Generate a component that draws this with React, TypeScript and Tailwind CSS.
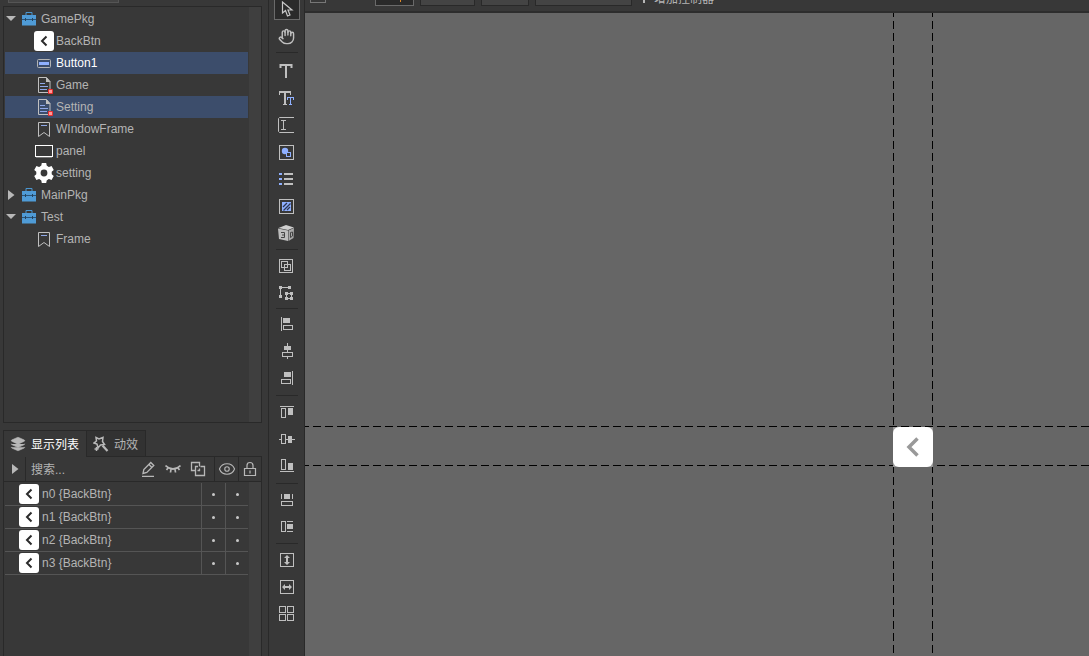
import React from "react";
import { Hand, Layers, Eye } from "lucide-react";

const treeItems = [
  { kind: "package", name: "GamePkg", open: true },
  { kind: "back", name: "BackBtn" },
  { kind: "button", name: "Button1", selected: true, active: true },
  { kind: "document", name: "Game" },
  { kind: "document", name: "Setting", selected: true },
  { kind: "bookmark", name: "WIndowFrame" },
  { kind: "panel", name: "panel" },
  { kind: "gear", name: "setting" },
  { kind: "package", name: "MainPkg", open: false },
  { kind: "package", name: "Test", open: true },
  { kind: "bookmark", name: "Frame" },
];

const displayList = ["n0 {BackBtn}", "n1 {BackBtn}", "n2 {BackBtn}", "n3 {BackBtn}"];

const BackIcon = () => (
  <svg width="20" height="20" viewBox="0 0 20 20" className="block shrink-0">
    <rect width="20" height="20" rx="3" fill="#fff" />
    <path d="M12.5 5.5 8 10l4.5 4.5" fill="none" stroke="#2b2b2b" strokeWidth="2" />
  </svg>
);

const itemIcons: Record<string, React.ReactNode> = {
  back: <BackIcon />,
  button: (
    <svg width="20" height="20" viewBox="0 0 20 20">
      <rect x="3.5" y="6.5" width="13" height="8" rx="1" fill="none" stroke="#b4b4b4" />
      <rect x="5" y="9" width="10" height="3" fill="#8fb0ff" />
    </svg>
  ),
  document: (
    <svg width="20" height="20" viewBox="0 0 20 20">
      <path d="M4.5 2.5h8l3.500 4v11H4.500z" fill="none" stroke="#c0c0c0" />
      <path d="M12 2v5h4.500z" fill="#c0c0c0" />
      <path d="M6 8.500h5M6 11.500h8M6 14.500h7" stroke="#8fa8e8" />
      <rect x="14" y="14" width="5" height="5" rx="1" fill="#f03030" />
      <rect x="15" y="15" width="3" height="3" fill="#ff9a9a" />
    </svg>
  ),
  bookmark: (
    <svg width="20" height="20" viewBox="0 0 20 20">
      <path d="M4.500 3.500h11v14l-5.500-4-5.500 4z" fill="none" stroke="#c0c0c0" />
      <path d="M7 6.500h6" stroke="#8fa8e8" />
    </svg>
  ),
  panel: (
    <svg width="20" height="20" viewBox="0 0 20 20">
      <rect x="1.500" y="4.500" width="17" height="11" fill="none" stroke="#fff" />
      <path d="M2 16.500h16" stroke="#777" />
    </svg>
  ),
  gear: (
    <svg width="20" height="20" viewBox="0 0 20 20" fill="#fff">
      <circle cx="10" cy="10" r="5.600" fill="none" stroke="#fff" strokeWidth="4.400" />
      <path d="M7.800 0h4.400l.8 4H7zM7.800 20h4.400l.8-4H7z" />
      <path d="M7.800 0h4.400l.8 4H7zM7.800 20h4.400l.8-4H7z" transform="rotate(60 10 10)" />
      <path d="M7.800 0h4.400l.8 4H7zM7.800 20h4.400l.8-4H7z" transform="rotate(120 10 10)" />
    </svg>
  ),
};

const PackageIcon = () => (
  <svg width="16" height="16" viewBox="0 0 16 16" className="block shrink-0">
    <path d="M5 4.500V1.500h6v3" fill="none" stroke="#4a97d2" />
    <path d="M1 4h14v4H1zM1 9h14v5.500H1z" fill="#4f9bd6" />
    <path d="M1 8.500h14" stroke="#2b5478" />
    <path d="M4.500 7v3M11.500 7v3" stroke="#24445e" />
  </svg>
);

const Caret = ({ open }: { open?: boolean }) => (
  <svg width="10" height="10" viewBox="0 0 10 10" fill="#b8b8b8" className="shrink-0">
    {open ? <path d="M0 2h10L5 7z" /> : <path d="M2 0v10L8.500 5z" />}
  </svg>
);

const Outline = (props: React.SVGProps<SVGRectElement>) => (
  <rect fill="none" stroke="#bfbfbf" {...props} />
);

const toolGroups = [
  {
    line: "mt-[2px] mb-[5px]",
    tools: [
      {
        label: "Text",
        icon: <path d="M7 7h12M13 6v14M7.500 6v4M18.500 6v4" stroke="#bfbfbf" strokeWidth="2" />,
      },
      {
        label: "Rich text",
        icon: (
          <>
            <path d="M6 7h12M12 6v14" stroke="#bfbfbf" strokeWidth="2" />
            <path d="M6.500 6v4M17.500 6v4M10 19.500h4" stroke="#bfbfbf" />
            <path d="M14 11h8v9h-8z" fill="#383838" />
            <path d="M14 12.500h7M17.500 12v8M14.500 12v3M20.500 12v3M16 19.500h3" stroke="#8fb0ff" />
          </>
        ),
      },
      {
        label: "Input text",
        icon: (
          <path
            d="M21 5.500H6.500L5.500 6.500v13l1 1H21M8 8.500h5M8 17.500h5M10.500 8v10"
            fill="none"
            stroke="#bfbfbf"
          />
        ),
      },
      {
        label: "Graph",
        icon: (
          <>
            <Outline x="6.500" y="6.500" width="14" height="14" />
            <circle cx="12" cy="12" r="3.200" fill="#8fb0ff" />
            <rect x="13.500" y="13.500" width="4" height="4" fill="#383838" stroke="#8fb0ff" />
          </>
        ),
      },
      {
        label: "List",
        icon: (
          <>
            <path d="M6 8h3M6 13h3M6 18h3" stroke="#8fb0ff" strokeWidth="2" />
            <path d="M11 8h9M11 13h9M11 18h9" stroke="#bfbfbf" strokeWidth="2" />
          </>
        ),
      },
      {
        label: "Loader",
        icon: (
          <>
            <Outline x="6.500" y="6.500" width="14" height="14" />
            <rect x="9" y="9" width="9" height="9" fill="#8fb0ff" />
            <path d="M10 14l4-4M10.500 17.500l7-7M14 17l3-3" stroke="#2c3650" strokeWidth="1.300" />
          </>
        ),
      },
      {
        label: "3D loader",
        icon: (
          <>
            <path d="M5.500 8l7.500-3 8 2.500-6 2.500z" fill="#cfcfcf" />
            <path d="M5 8.500l10 2V21l-9-2z" fill="#bdbdbd" />
            <path d="M15.500 10.500L21 8l-.5 10-5 3z" fill="#a8a8a8" />
            <path d="M8 12.500h3.500v5H8M9 15h2.500" fill="none" stroke="#444" />
            <path d="M17.500 12.500v5l2-1.500v-4z" fill="none" stroke="#444" />
          </>
        ),
      },
    ],
  },
  {
    line: "mt-[2px] mb-[3px]",
    tools: [
      {
        label: "Group",
        icon: (
          <>
            <Outline x="6.500" y="6.500" width="13" height="13" />
            <Outline x="8.500" y="8.500" width="6" height="6" />
            <Outline x="11.500" y="11.500" width="6" height="6" />
          </>
        ),
      },
      {
        label: "Ungroup",
        icon: (
          <>
            <path d="M7.500 18V7.500H17" fill="none" stroke="#bfbfbf" />
            <path d="M6 6h3v3H6zM15 6h3v3h-3zM6 15h3v3H6z" fill="#bfbfbf" />
            <Outline x="13.500" y="13.500" width="5" height="5" />
            <path d="M12 12h3v3h-3zM17 12h3v3h-3zM12 17h3v3h-3zM17 17h3v3h-3z" fill="#bfbfbf" />
          </>
        ),
      },
    ],
  },
  {
    line: "mt-[1px] mb-[2px]",
    tools: [
      {
        label: "Align left",
        icon: (
          <>
            <path d="M8 6h1v14H8zM10 7h7v5h-7z" fill="#bfbfbf" />
            <Outline x="10.500" y="14.500" width="9" height="4" />
          </>
        ),
      },
      {
        label: "Align center",
        icon: (
          <>
            <path d="M14 5h1v16h-1zM11 8h7v4h-7z" fill="#bfbfbf" />
            <Outline x="9.500" y="14.500" width="10" height="4" fill="#383838" />
          </>
        ),
      },
      {
        label: "Align right",
        icon: (
          <>
            <path d="M19 6h1v14h-1zM11 7h7v5h-7z" fill="#bfbfbf" />
            <Outline x="8.500" y="14.500" width="9" height="4" />
          </>
        ),
      },
    ],
  },
  {
    line: "mt-[3px] mb-[3px]",
    tools: [
      {
        label: "Align top",
        icon: (
          <>
            <path d="M7 7h14v1H7zM15 9h5v7h-5z" fill="#bfbfbf" />
            <Outline x="8.500" y="9.500" width="4" height="9" />
          </>
        ),
      },
      {
        label: "Align middle",
        icon: (
          <>
            <path d="M6 13h16v1H6zM15 10h4v7h-4z" fill="#bfbfbf" />
            <Outline x="8.500" y="8.500" width="4" height="9" fill="#383838" />
          </>
        ),
      },
      {
        label: "Align bottom",
        icon: (
          <>
            <path d="M7 18h14v1H7zM15 10h5v7h-5z" fill="#bfbfbf" />
            <Outline x="8.500" y="6.500" width="4" height="10" />
          </>
        ),
      },
    ],
  },
  {
    line: "mt-[3px] mb-[2px]",
    tools: [
      {
        label: "Same width",
        icon: (
          <>
            <path d="M8 8h1v5H8zM19 8h1v5h-1zM11 8h6v5h-6z" fill="#bfbfbf" />
            <Outline x="8.500" y="15.500" width="11" height="4" />
          </>
        ),
      },
      {
        label: "Same height",
        icon: (
          <>
            <path d="M14 8h6v1h-6zM14 18h6v1h-6zM14 11h6v5h-6z" fill="#bfbfbf" />
            <Outline x="8.500" y="8.500" width="4" height="10" />
          </>
        ),
      },
    ],
  },
  {
    line: "mt-[3px] mb-[3px]",
    tools: [
      {
        label: "Fit height",
        icon: (
          <>
            <Outline x="7.500" y="6.500" width="13" height="13" />
            <path d="M14 8l3 3h-2v4h2l-3 3-3-3h2v-4h-2z" fill="#bfbfbf" />
          </>
        ),
      },
      {
        label: "Fit width",
        icon: (
          <>
            <Outline x="7.500" y="6.500" width="13" height="13" />
            <path d="M9 13l3-3v2h4v-2l3 3-3 3v-2h-4v2z" fill="#bfbfbf" />
          </>
        ),
      },
      {
        label: "Arrange",
        icon: (
          <>
            <Outline x="6.500" y="5.500" width="6" height="6" />
            <Outline x="14.500" y="5.500" width="6" height="6" />
            <Outline x="6.500" y="13.500" width="6" height="6" />
            <Outline x="14.500" y="13.500" width="6" height="6" />
          </>
        ),
      },
    ],
  },
];

const ResourceTree = () => (
  <div className="flex min-h-0 flex-[417] border border-[#292929]">
    <ul className="min-w-0 flex-1 py-px pl-px">
      {treeItems.map((item, idx) => (
        <li
          key={idx}
          className={`flex h-[22px] items-center ${item.selected ? "bg-[#3c4d6b]" : ""} ${
            item.active ? "text-white" : ""
          }`}
        >
          {item.kind === "package" ? (
            <div className="flex items-center pl-px">
              <Caret open={item.open} />
              <span className="mr-1 ml-[5px]">
                <PackageIcon />
              </span>
              {item.name}
            </div>
          ) : (
            <div className="flex items-center gap-[2px] pl-[29px]">
              {itemIcons[item.kind]}
              {item.name}
            </div>
          )}
        </li>
      ))}
    </ul>
    <div className="ml-px w-3 bg-[#3f3f3f]" />
  </div>
);

const DisplayPanel = () => (
  <div className="flex min-h-0 flex-[227] flex-col">
    <div className="flex h-[27px] shrink-0" role="tablist">
      <button
        role="tab"
        aria-selected="true"
        className="flex w-[83px] items-center gap-[5px] border-t border-l border-[#292929] pl-[6px] text-white"
      >
        <Layers size={16} fill="#b8b8b8" color="#b8b8b8" strokeWidth={1} />
        <span className="pt-[2px]">显示列表</span>
      </button>
      <button
        role="tab"
        aria-selected="false"
        className="flex w-[60px] items-center gap-[5px] border border-[#292929] bg-[#323232] pl-[6px]"
      >
        <svg width="16" height="16" viewBox="0 0 16 16" fill="none" stroke="#b8b8b8" strokeWidth="1.500">
          <path d="M3 1.500l3 1.500 4-1.500-.5 4 2 3-4 .5-2.500 3-1-4L1 7l2.500-2z" />
          <path d="M9.500 9.500l5 5.500" strokeWidth="2.200" />
          <path d="M3.500 11v4M1.500 13h4" />
        </svg>
        <span className="pt-[2px]">动效</span>
      </button>
      <div className="flex-1 border-b border-[#292929]" />
    </div>
    <div className="flex h-[25px] shrink-0 items-stretch border-x border-b border-[#292929]">
      <button aria-label="Expand" className="flex w-[21px] items-center justify-center">
        <Caret />
      </button>
      <input
        aria-label="搜索"
        placeholder="搜索..."
        className="w-0 min-w-0 flex-1 border-l border-[#292929] bg-transparent pt-[2px] pl-[5px] outline-none placeholder:text-[#b4b4b4]"
      />
      <div className="flex items-center gap-[9px] pr-2">
        <button aria-label="Edit">
          <svg width="16" height="16" viewBox="0 0 16 16" fill="none" stroke="#b8b8b8" strokeWidth="1.300" className="block">
            <path d="M3 12.500l.8-4 7-7 3 3-7 7zM9 3.500l3 3M2 15.500h12" />
          </svg>
        </button>
        <button aria-label="Hide">
          <svg width="16" height="16" viewBox="0 0 16 16" fill="none" stroke="#b8b8b8" strokeWidth="1.700" className="block">
            <path d="M.500 4.500q7.500 7 15 0M3 7l-1.500 2M6 8l-.5 3.500M10 8l.5 3.500M13 7l1.500 2" />
          </svg>
        </button>
        <button aria-label="Duplicate">
          <svg width="16" height="16" viewBox="0 0 16 16" fill="none" stroke="#b8b8b8" strokeWidth="1.300" className="block">
            <path d="M5.500 9.500h-4v-8h8v4M8 5.500H5.500v9h9v-9h-4M7.500 9.500h2v-2" />
          </svg>
        </button>
      </div>
      <button aria-label="Visibility" className="flex w-6 items-center justify-center border-l border-[#292929]">
        <Eye size={18} color="#b8b8b8" strokeWidth={1.5} />
      </button>
      <button aria-label="Lock" className="flex w-[23px] items-center justify-center border-l border-[#292929]">
        <svg width="14" height="16" viewBox="0 0 14 16" fill="none" stroke="#b8b8b8" strokeWidth="1.200">
          <path d="M1.500 7.500h11v7h-11zM4 7V4.500q0-3 3-3t3 3V7M7 9.500v3" />
        </svg>
      </button>
    </div>
    <div className="flex min-h-0 flex-1 border-x border-[#292929]">
      <div className="min-w-0 flex-1 pt-px pl-px">
        <table className="w-full table-fixed border-separate border-spacing-0">
          <tbody>
            {displayList.map((name) => (
              <tr key={name} className="h-[23px]">
                <td className="border-b border-[#555] p-0 pl-[14px]">
                  <div className="flex items-center gap-[3px]">
                    <BackIcon />
                    {name}
                  </div>
                </td>
                <td className="w-6 border-b border-l border-[#555] p-0">
                  <div className="mx-auto h-[3px] w-[3px] rounded-full bg-[#c8c8c8]" />
                </td>
                <td className="w-[23px] border-b border-l border-[#555] p-0">
                  <div className="mx-auto h-[3px] w-[3px] rounded-full bg-[#c8c8c8]" />
                </td>
              </tr>
            ))}
          </tbody>
        </table>
      </div>
      <div className="ml-px w-3 bg-[#3f3f3f]" />
    </div>
  </div>
);

const Toolbar = () => (
  <div className="flex w-9 shrink-0 flex-col overflow-hidden border-r border-[#292929]">
    <button
      aria-label="Select"
      className="ml-[5px] flex h-5 w-[26px] shrink-0 justify-center border border-t-0 border-[#6a6a6a] bg-[#2a2a2a]"
    >
      <svg width="16" height="18" viewBox="0 0 16 18" fill="none" stroke="#c8c8c8" strokeWidth="1.200">
        <path d="M3.500 2v11l3-2.500 2 5.500 2.500-1-2-5h4z" />
      </svg>
    </button>
    <button aria-label="Hand" className="mt-[3px] ml-1 flex h-[27px] w-[27px] shrink-0 items-center justify-center">
      <Hand size={17} color="#bfbfbf" strokeWidth={2} />
    </button>
    {toolGroups.map((group, idx) => (
      <React.Fragment key={idx}>
        <hr className={`ml-[7px] h-px w-[22px] shrink-0 border-0 bg-[#292929] ${group.line}`} />
        {group.tools.map((tool) => (
          <button key={tool.label} aria-label={tool.label} className="ml-1 h-[27px] w-[27px] shrink-0">
            <svg width="27" height="27" viewBox="0 0 27 27" className="block">
              {tool.icon}
            </svg>
          </button>
        ))}
      </React.Fragment>
    ))}
  </div>
);

const Stage = () => (
  <main className="flex min-w-0 flex-1 flex-col">
    {/* Controller bar */}
    <div className="flex h-[13px] shrink-0 items-start overflow-hidden border-b-2 border-[#2d2d2d] pl-[5px]">
      <button aria-label="Toggle" className="mr-[49px] h-[3px] w-4 border border-t-0 border-[#777]" />
      <div className="flex gap-[6px]">
        <button aria-label="Controller" className="flex h-[6px] w-[39px] justify-center border border-t-0 border-[#6a6a6a] bg-[#2a2a2a] pl-3">
          <span className="h-[2px] w-px bg-[#e08a28]" />
        </button>
        <button aria-label="Width" className="h-[6px] w-[55px] border border-t-0 border-[#292929] bg-[#444]" />
        <button aria-label="Height" className="h-[6px] w-12 border border-t-0 border-[#292929] bg-[#444]" />
        <button aria-label="Scale" className="h-[6px] w-[97px] border border-t-0 border-[#292929] bg-[#444]" />
      </div>
      <button className="ml-[11px] flex h-[5px] items-end gap-[9px] overflow-hidden leading-3 whitespace-nowrap">
        <span className="mb-[2px] h-[3px] w-[2px] bg-[#b8b8b8]" />
        增加控制器
      </button>
    </div>

    {/* Canvas */}
    <div className="relative min-h-0 flex-1 overflow-hidden bg-[#666]">
      <svg className="absolute inset-0 h-full w-full" stroke="#000" strokeDasharray="8 4" strokeDashoffset="4">
        <line x1="0" y1="413.5" x2="100%" y2="413.5" />
        <line x1="0" y1="452.5" x2="100%" y2="452.5" />
        <line x1="588.5" y1="0" x2="588.5" y2="100%" />
        <line x1="627.5" y1="0" x2="627.5" y2="100%" />
      </svg>
      <button aria-label="Back" className="absolute top-[414px] left-[588px] h-10 w-10 bg-[#999]">
        <svg width="40" height="40" viewBox="0 0 40 40" className="block">
          <rect width="40" height="40" rx="6" fill="#fff" />
          <path d="M24.500 11.500 16 20l8.500 8.500" fill="none" stroke="#999" strokeWidth="3.500" />
        </svg>
      </button>
    </div>
  </main>
);

const App = () => {
  return (
    <div className="flex h-screen overflow-hidden bg-[#383838] font-['Liberation_Sans','Noto_Sans_CJK_SC',sans-serif] text-xs text-[#b4b4b4]">
      <aside className="flex w-[269px] shrink-0 flex-col border-r border-[#292929] pr-[6px] pl-[3px]">
        <div className="h-[6px] shrink-0">
          <div className="ml-[5px] h-[3px] w-[111px] border border-t-0 border-[#555] bg-[#444]" />
        </div>
        <ResourceTree />
        <div className="h-[7px] shrink-0" />
        <DisplayPanel />
      </aside>
      <Toolbar />
      <Stage />
    </div>
  );
};

export default App;
